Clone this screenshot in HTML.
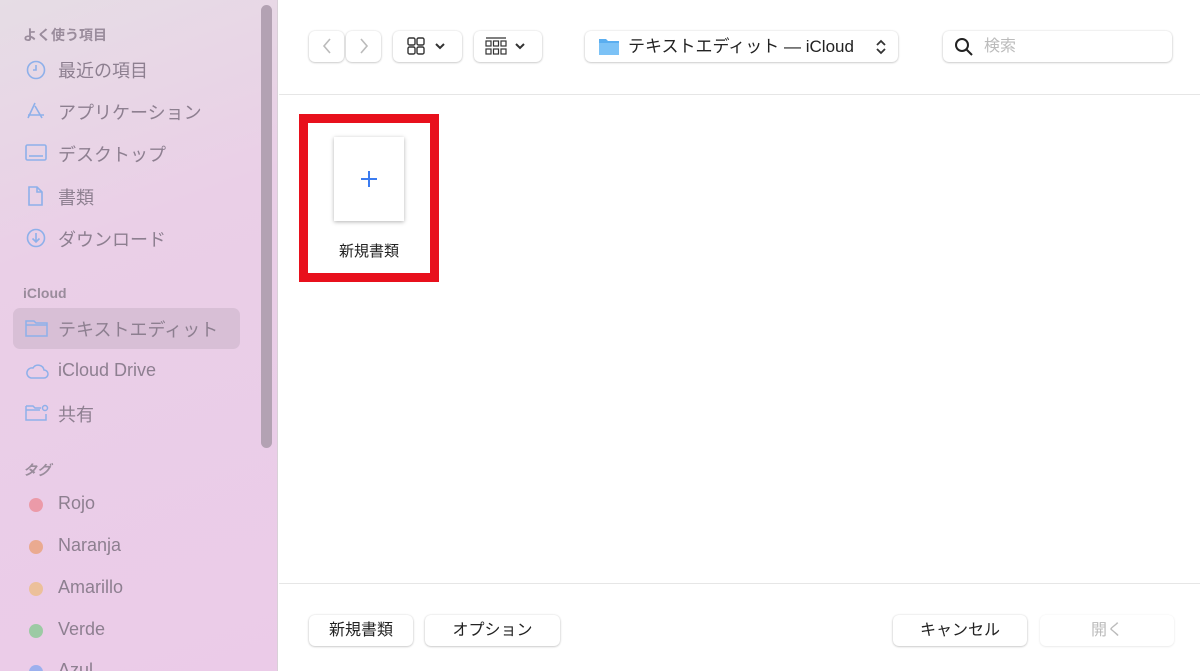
<!DOCTYPE html>
<html><head><meta charset="utf-8"><style>
*{margin:0;padding:0;box-sizing:border-box}
html,body{width:1200px;height:671px;overflow:hidden}
body{font-family:"Liberation Sans","Noto Sans CJK JP",sans-serif;background:#fff;position:relative}
.sb{position:absolute;left:0;top:0;width:278px;height:671px;background:linear-gradient(160deg,#e6dde5 0%,#eacfe7 35%,#ebcbe8 100%);border-right:1px solid #d9d0d8;overflow:hidden}
.h{position:absolute;left:23px;font-size:14px;color:#9a8c9c;font-weight:bold}
.it{position:absolute;left:58px;font-size:18px;color:#8d7f90}
.ic{position:absolute;left:25px}
.dot{position:absolute;left:29px;width:14px;height:14px;border-radius:50%}
.scroll{position:absolute;left:261px;top:5px;width:11px;height:443px;border-radius:6px;background:#b3a2b3}
.btn{position:absolute;background:#fff;border-radius:6px;box-shadow:0 0.5px 2px rgba(0,0,0,.3);font-size:16px;color:#222;text-align:center;line-height:31px}
.line{position:absolute;left:279px;right:0;height:1px;background:#e6e6e6}
</style></head><body>
<div class="sb">
<div class="h" style="top:25px">よく使う項目</div>
<svg class="ic" style="top:59px" width="22" height="22" viewBox="0 0 22 22" fill="none" stroke="#8eb0ea" stroke-width="1.6"><circle cx="11" cy="11" r="8.5"/><path d="M11 6v5H8"/></svg>
<div class="it" style="top:57px">最近の項目</div>
<svg class="ic" style="top:100px" width="22" height="22" viewBox="0 0 22 22" fill="none" stroke="#8eb0ea" stroke-width="1.6"><path d="M10 3l-7 15M10 6l7 12M3 15h16"/></svg>
<div class="it" style="top:99px">アプリケーション</div>
<svg class="ic" style="top:143px" width="22" height="20" viewBox="0 0 22 20" fill="none" stroke="#8eb0ea" stroke-width="1.6"><rect x="1" y="2" width="20" height="15" rx="1.5"/><path d="M4 13h14"/></svg>
<div class="it" style="top:141px">デスクトップ</div>
<svg class="ic" style="top:185px" width="22" height="22" viewBox="0 0 22 22" fill="none" stroke="#8eb0ea" stroke-width="1.6"><path d="M4 2h8l5 5v13H4z M12 2v5h5"/></svg>
<div class="it" style="top:184px">書類</div>
<svg class="ic" style="top:227px" width="22" height="22" viewBox="0 0 22 22" fill="none" stroke="#8eb0ea" stroke-width="1.6"><circle cx="11" cy="11" r="8.5"/><path d="M11 6v9M7.5 11.5L11 15l3.5-3.5"/></svg>
<div class="it" style="top:226px">ダウンロード</div>
<div class="h" style="top:285px">iCloud</div>
<div style="position:absolute;left:13px;top:308px;width:227px;height:41px;border-radius:7px;background:#d8bfd6"></div>
<svg class="ic" style="top:318px" width="24" height="20" viewBox="0 0 24 20" fill="none" stroke="#8eb0ea" stroke-width="1.5"><path d="M1 3h8l2 2h11v13H1z M1 7h21"/></svg>
<div class="it" style="top:316px">テキストエディット</div>
<svg class="ic" style="top:362px" width="24" height="18" viewBox="0 0 24 18" fill="none" stroke="#8eb0ea" stroke-width="1.5"><path d="M6 16h13a4 4 0 0 0 0-8 6 6 0 0 0-11-2A5 5 0 0 0 6 16z"/></svg>
<div class="it" style="top:360px">iCloud Drive</div>
<svg class="ic" style="top:403px" width="24" height="20" viewBox="0 0 24 20" fill="none" stroke="#8eb0ea" stroke-width="1.5"><path d="M1 3h7l2 2h6 M1 3v14h20V11 M1 7h14"/><circle cx="20" cy="5" r="2.5"/></svg>
<div class="it" style="top:401px">共有</div>
<div class="h" style="top:460px;font-style:italic">タグ</div>
<div class="dot" style="top:498px;background:#eb9aa8"></div><div class="it" style="top:493px">Rojo</div>
<div class="dot" style="top:540px;background:#eaaa90"></div><div class="it" style="top:535px">Naranja</div>
<div class="dot" style="top:582px;background:#ecc09a"></div><div class="it" style="top:577px">Amarillo</div>
<div class="dot" style="top:624px;background:#9ccaa4"></div><div class="it" style="top:619px">Verde</div>
<div class="dot" style="top:665px;background:#9cb0ee"></div><div class="it" style="top:660px">Azul</div>
<div class="scroll"></div>
</div>

<div class="btn" style="left:309px;top:31px;width:35px;height:31px"><svg width="12" height="18" viewBox="0 0 12 18" style="margin-top:6px" fill="none" stroke="#bbb" stroke-width="1.6"><path d="M9 2L3 9l6 7"/></svg></div>
<div class="btn" style="left:346px;top:31px;width:35px;height:31px"><svg width="12" height="18" viewBox="0 0 12 18" style="margin-top:6px" fill="none" stroke="#bbb" stroke-width="1.6"><path d="M3 2l6 7-6 7"/></svg></div>
<div class="btn" style="left:393px;top:31px;width:69px;height:31px"><svg width="50" height="20" viewBox="0 0 50 20" style="margin-top:5px" fill="none" stroke="#333" stroke-width="1.4"><rect x="5" y="2" width="7" height="7" rx="1.5"/><rect x="14" y="2" width="7" height="7" rx="1.5"/><rect x="5" y="11" width="7" height="7" rx="1.5"/><rect x="14" y="11" width="7" height="7" rx="1.5"/><path d="M33 8l4 4 4-4" stroke-width="2"/></svg></div>
<div class="btn" style="left:474px;top:31px;width:68px;height:31px"><svg width="50" height="20" viewBox="0 0 50 20" style="margin-top:5px" fill="none" stroke="#333" stroke-width="1.2"><path d="M3 2h20"/><rect x="3" y="5" width="5" height="5"/><rect x="10.5" y="5" width="5" height="5"/><rect x="18" y="5" width="5" height="5"/><rect x="3" y="13" width="5" height="5"/><rect x="10.5" y="13" width="5" height="5"/><rect x="18" y="13" width="5" height="5"/><path d="M33 8l4 4 4-4" stroke-width="2"/></svg></div>
<div class="btn" style="left:585px;top:31px;width:313px;height:31px;text-align:left;font-size:17px">
<svg width="22" height="20" viewBox="0 0 22 20" style="position:absolute;left:13px;top:6px"><path d="M1 2h7l2 2h11v14H1z" fill="#5aaef0"/><path d="M1 6h20v12H1z" fill="#7cc2f6"/></svg>
<span style="position:absolute;left:43px;top:0">テキストエディット — iCloud</span>
<svg width="12" height="18" viewBox="0 0 12 18" style="position:absolute;left:290px;top:7px" fill="none" stroke="#333" stroke-width="1.8"><path d="M2 7l4-4 4 4M2 11l4 4 4-4"/></svg></div>
<div class="btn" style="left:943px;top:31px;width:229px;height:31px;text-align:left">
<svg width="20" height="20" viewBox="0 0 20 20" style="position:absolute;left:11px;top:6px" fill="none" stroke="#222" stroke-width="2"><circle cx="8" cy="8" r="6"/><path d="M12.5 12.5L18 18"/></svg>
<span style="position:absolute;left:41px;color:#bbb">検索</span></div>
<div class="line" style="top:94px"></div>

<div style="position:absolute;left:299px;top:114px;width:140px;height:168px;border:9px solid #e8101c"></div>
<div style="position:absolute;left:334px;top:137px;width:70px;height:84px;background:#fff;box-shadow:0 1px 4px rgba(0,0,0,.3)"><svg width="70" height="84" viewBox="0 0 70 84"><path d="M35 34v16M27 42h16" stroke="#3b7cf0" stroke-width="2"/></svg></div>
<div style="position:absolute;left:320px;top:240px;width:98px;text-align:center;font-size:15px;color:#222">新規書類</div>

<div class="line" style="top:583px"></div>
<div class="btn" style="left:309px;top:615px;width:104px">新規書類</div>
<div class="btn" style="left:425px;top:615px;width:135px">オプション</div>
<div class="btn" style="left:893px;top:615px;width:134px">キャンセル</div>
<div class="btn" style="left:1040px;top:615px;width:134px;color:#bbb;box-shadow:0 0.5px 2px rgba(0,0,0,.12)">開く</div>
</body></html>
